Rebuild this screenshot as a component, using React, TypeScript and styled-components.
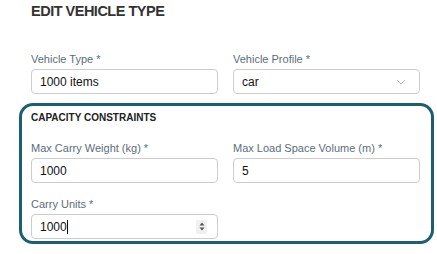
import React from "react";
import styled, { createGlobalStyle } from "styled-components";

const GlobalStyle = createGlobalStyle`
  body {
    margin: 0;
    background: #fff;
    font-family: "Liberation Sans", Arial, sans-serif;
  }
`;

export default function App() {
  return (
    <>
      <GlobalStyle />
      <Page>
        <Title>EDIT VEHICLE TYPE</Title>
        <Row>
          <Field>
            <Label>Vehicle Type *</Label>
            <Input>1000 items</Input>
          </Field>
          <Field>
            <Label>Vehicle Profile *</Label>
            <Input>
              car
              <Chevron viewBox="0 0 12 8">
                <path d="M1 1.5l5 5 5-5" fill="none" stroke="#999" strokeWidth="1" />
              </Chevron>
            </Input>
          </Field>
        </Row>
        <Capacity>
          <SectionTitle>CAPACITY CONSTRAINTS</SectionTitle>
          <Grid>
            <Field>
              <Label>Max Carry Weight (kg) *</Label>
              <Input>1000</Input>
            </Field>
            <Field>
              <Label>Max Load Space Volume (m) *</Label>
              <Input>5</Input>
            </Field>
            <Field>
              <Label>Carry Units *</Label>
              <Input>
                <span>
                  1000<Caret />
                </span>
                <Spinner>
                  <svg width="6" height="9" viewBox="0 0 6 9">
                    <path d="M3 0.5L5.5 3.5H0.5z M3 8.5L0.5 5.5H5.5z" fill="#555" />
                  </svg>
                </Spinner>
              </Input>
            </Field>
          </Grid>
        </Capacity>
      </Page>
    </>
  );
}

const Page = styled.div`
  width: 415px;
  padding: 3px 0 0 19px;
`;

const Title = styled.h2`
  margin: 0 0 33px 12px;
  font-size: 14.5px;
  line-height: 17px;
  letter-spacing: -0.5px;
  font-weight: 700;
  color: #333;
`;

const Row = styled.div`
  display: grid;
  grid-template-columns: 187px 187px;
  column-gap: 15px;
  padding-left: 12px;
  margin-bottom: 9px;
`;

const Field = styled.div`
  display: flex;
  flex-direction: column;
`;

const Label = styled.label`
  font-size: 11px;
  line-height: 13px;
  color: #5b6e7b;
  margin-bottom: 3px;
`;

const Input = styled.div`
  box-sizing: border-box;
  height: 25px;
  display: flex;
  align-items: center;
  justify-content: space-between;
  padding: 0 10px 0 8px;
  border: 1px solid #ccc;
  border-radius: 4px;
  font-size: 12px;
  color: #111;
  background: #fff;
`;

const Chevron = styled.svg`
  width: 10px;
  height: 6px;
  margin-right: 3px;
`;

const Caret = styled.span`
  display: inline-block;
  width: 1px;
  height: 14px;
  background: #111;
  vertical-align: -3px;
`;

const Spinner = styled.span`
  display: flex;
  align-items: center;
  justify-content: center;
  width: 11px;
  height: 14px;
  background: #f0f0f0;
  border-radius: 2px;
`;

const Capacity = styled.section`
  box-sizing: border-box;
  width: 415px;
  border: 3px solid #1d5f72;
  border-radius: 14px;
  padding: 6px 11px 2px 9px;
`;

const SectionTitle = styled.h3`
  margin: 0 0 18px;
  font-size: 10px;
  line-height: 12px;
  font-weight: 700;
  color: #222;
`;

const Grid = styled.div`
  display: grid;
  grid-template-columns: 187px 187px;
  column-gap: 15px;
  row-gap: 15px;
`;
